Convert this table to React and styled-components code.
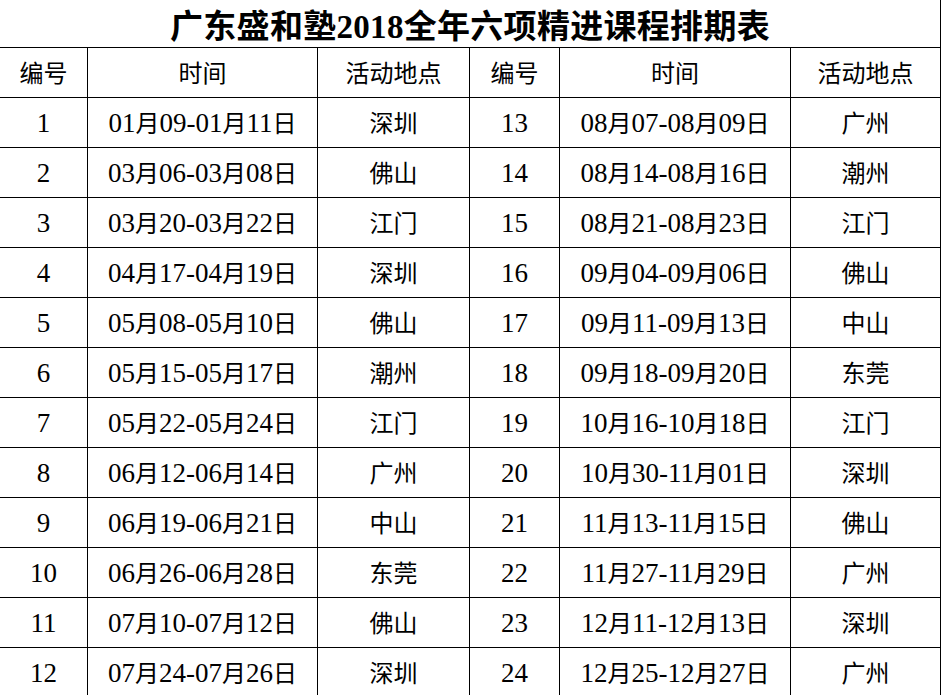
import React from "react";
import styled, { createGlobalStyle } from "styled-components";

const Global = createGlobalStyle`
  html, body { margin: 0; padding: 0; background: #fff; }
  body { font-family: "Liberation Serif", "Noto Sans CJK SC", serif; color: #000; }
`;

const Page = styled.div`
  width: 941px;
  height: 695px;
  overflow: hidden;
  background: #fff;
`;

const Grid = styled.div`
  display: grid;
  grid-template-columns: 88px 230px 152px 90px 231px 150px;
  grid-auto-rows: 50px;
  grid-template-rows: 48px;
`;

const Title = styled.div`
  grid-column: 1 / -1;
  box-sizing: border-box;
  border-right: 1px solid #000;
  border-bottom: 1px solid #000;
  display: flex;
  align-items: center;
  justify-content: center;
  font-family: "Liberation Serif", "Noto Sans CJK SC", serif;
  font-weight: 700;
  font-size: 33px;
  padding-top: 1px;
  letter-spacing: 0.3px;
`;

const Cell = styled.div`
  box-sizing: border-box;
  border-right: 1px solid #000;
  border-bottom: 1px solid #000;
  display: flex;
  align-items: center;
  justify-content: center;
  font-size: 24px;
  line-height: 1;
  padding-top: 2px;
  white-space: nowrap;
`;

const Num = styled.span`
  font-family: "Liberation Serif", serif;
  font-size: 27px;
  line-height: 1;
`;

function Mixed({ text }) {
  const parts = text.split(/([0-9\-]+)/).filter(Boolean);
  return parts.map((p, i) =>
    /[0-9\-]/.test(p) ? <Num key={i}>{p}</Num> : <span key={i}>{p}</span>
  );
}

const left = [
  ["1", "01月09-01月11日", "深圳"],
  ["2", "03月06-03月08日", "佛山"],
  ["3", "03月20-03月22日", "江门"],
  ["4", "04月17-04月19日", "深圳"],
  ["5", "05月08-05月10日", "佛山"],
  ["6", "05月15-05月17日", "潮州"],
  ["7", "05月22-05月24日", "江门"],
  ["8", "06月12-06月14日", "广州"],
  ["9", "06月19-06月21日", "中山"],
  ["10", "06月26-06月28日", "东莞"],
  ["11", "07月10-07月12日", "佛山"],
  ["12", "07月24-07月26日", "深圳"],
];

const right = [
  ["13", "08月07-08月09日", "广州"],
  ["14", "08月14-08月16日", "潮州"],
  ["15", "08月21-08月23日", "江门"],
  ["16", "09月04-09月06日", "佛山"],
  ["17", "09月11-09月13日", "中山"],
  ["18", "09月18-09月20日", "东莞"],
  ["19", "10月16-10月18日", "江门"],
  ["20", "10月30-11月01日", "深圳"],
  ["21", "11月13-11月15日", "佛山"],
  ["22", "11月27-11月29日", "广州"],
  ["23", "12月11-12月13日", "深圳"],
  ["24", "12月25-12月27日", "广州"],
];

const headers = ["编号", "时间", "活动地点", "编号", "时间", "活动地点"];

export default function App() {
  return (
    <Page>
      <Global />
      <Grid>
        <Title>广东盛和塾2018全年六项精进课程排期表</Title>
        {headers.map((h, i) => (
          <Cell key={"h" + i}>{h}</Cell>
        ))}
        {left.map((row, i) => {
          const r = right[i];
          return (
            <React.Fragment key={i}>
              <Cell><Mixed text={row[0]} /></Cell>
              <Cell><Mixed text={row[1]} /></Cell>
              <Cell>{row[2]}</Cell>
              <Cell><Mixed text={r[0]} /></Cell>
              <Cell><Mixed text={r[1]} /></Cell>
              <Cell>{r[2]}</Cell>
            </React.Fragment>
          );
        })}
      </Grid>
    </Page>
  );
}
